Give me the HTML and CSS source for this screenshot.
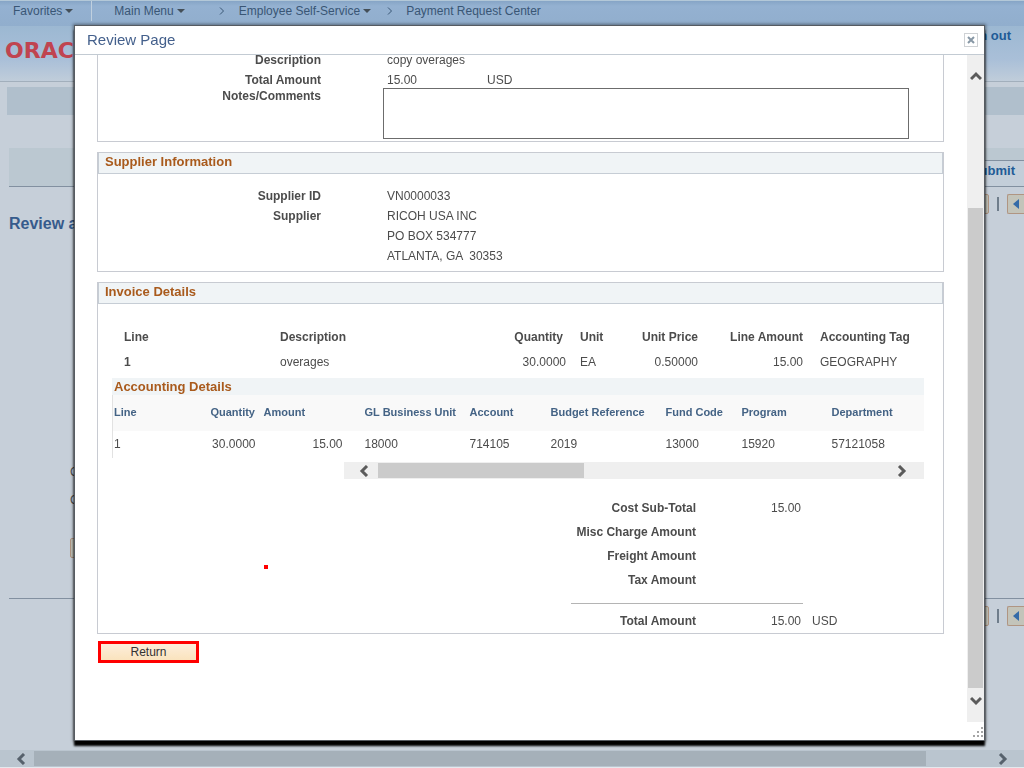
FILE: index.html
```html
<!DOCTYPE html>
<html lang="en">
<head>
<meta charset="utf-8">
<title>Review Page</title>
<link rel="stylesheet" href="styles.css">
</head>
<body>
<div class="app">
  <nav class="topnav">
    <a class="nav-link nav-fav" href="#">Favorites <span class="caret"></span></a>
    <a class="nav-link nav-main" href="#">Main Menu <span class="caret"></span></a>
    <svg class="crumb" viewBox="0 0 6 8"><path d="M1 0.5 L4.5 4 L1 7.5"/></svg>
    <a class="nav-link" href="#">Employee Self-Service <span class="caret"></span></a>
    <svg class="crumb" viewBox="0 0 6 8"><path d="M1 0.5 L4.5 4 L1 7.5"/></svg>
    <a class="nav-link" href="#">Payment Request Center</a>
  </nav>
  <header class="brand-bar">
    <span class="brand">ORACLE</span>
    <a class="sign-out" href="#">Sign out</a>
  </header>
  <main class="page">
    <div class="page-strip"></div>
    <div class="steps"><a class="step" href="#">Submit</a></div>
    <div class="page-head">
      <h1 class="page-title">Review and Submit</h1>
      <div class="pager">
        <button class="page-btn" type="button" aria-label="Exit"></button>
        <span class="pager-sep"></span>
        <button class="page-btn" type="button" aria-label="Previous"><svg class="prev" viewBox="0 0 6 10"><path d="M6 0 V10 L0 5 Z"/></svg></button>
      </div>
    </div>
    <div class="page-fields">
      <span>Comments</span>
      <span>Comments</span>
      <button class="page-btn" type="button" aria-label="Review"></button>
    </div>
    <div class="pager">
      <button class="page-btn" type="button" aria-label="Exit"></button>
      <span class="pager-sep"></span>
      <button class="page-btn" type="button" aria-label="Previous"><svg class="prev" viewBox="0 0 6 10"><path d="M6 0 V10 L0 5 Z"/></svg></button>
    </div>
  </main>
  <div class="page-scroll">
    <svg class="arrow" viewBox="0 0 10 12"><path d="M8 1 L3 6 L8 11"/></svg>
    <span class="page-thumb"></span>
    <svg class="arrow" viewBox="0 0 10 12"><path d="M2 1 L7 6 L2 11"/></svg>
  </div>
</div>

<section class="modal" role="dialog" aria-labelledby="modal-title">
  <header class="modal-head">
    <h2 class="modal-title" id="modal-title">Review Page</h2>
    <button class="close" type="button" aria-label="Close"><svg viewBox="0 0 8 8"><path d="M1 1 L7 7 M7 1 L1 7"/></svg></button>
  </header>
  <div class="modal-main">
    <div class="modal-body">
      <section class="panel panel-first">
        <div class="fields">
          <span class="label">Description</span><span>copy overages</span>
          <span class="label">Total Amount</span><span class="amount"><span>15.00</span><span>USD</span></span>
        </div>
        <div class="fields notes">
          <label class="label" for="notes">Notes/Comments</label><textarea class="notes-box" id="notes"></textarea>
        </div>
      </section>

      <section class="panel">
        <h3 class="panel-title">Supplier Information</h3>
        <div class="fields supplier">
          <span class="label">Supplier ID</span><span>VN0000033</span>
          <span class="label">Supplier</span><span class="address">RICOH USA INC
PO BOX 534777
ATLANTA, GA  30353</span>
        </div>
      </section>

      <section class="panel">
        <h3 class="panel-title">Invoice Details</h3>
        <div class="invoice">
          <table class="lines">
            <colgroup><col class="l-line"><col class="l-desc"><col class="l-qty"><col class="l-unit"><col class="l-price"><col class="l-amt"><col></colgroup>
            <thead><tr><th>Line</th><th>Description</th><th class="num inset">Quantity</th><th>Unit</th><th class="num">Unit Price</th><th class="num">Line Amount</th><th class="tag">Accounting Tag</th></tr></thead>
            <tbody><tr><td class="strong">1</td><td>overages</td><td class="num">30.0000</td><td>EA</td><td class="num">0.50000</td><td class="num">15.00</td><td class="tag">GEOGRAPHY</td></tr></tbody>
          </table>
          <h4 class="sub-title">Accounting Details</h4>
          <table class="acct">
            <colgroup><col class="a-line"><col class="a-qty"><col class="a-amt"><col class="a-gl"><col class="a-acct"><col class="a-bud"><col class="a-fund"><col class="a-prog"><col></colgroup>
            <thead><tr><th>Line</th><th class="num">Quantity</th><th>Amount</th><th>GL Business Unit</th><th>Account</th><th>Budget Reference</th><th>Fund Code</th><th>Program</th><th>Department</th></tr></thead>
            <tbody><tr><td>1</td><td class="num">30.0000</td><td class="num spaced">15.00</td><td>18000</td><td>714105</td><td>2019</td><td>13000</td><td>15920</td><td>57121058</td></tr></tbody>
          </table>
          <div class="grid-scroll">
            <svg class="arrow" viewBox="0 0 10 12"><path d="M8 1 L3 6 L8 11"/></svg>
            <span class="grid-thumb"></span>
            <svg class="arrow" viewBox="0 0 10 12"><path d="M2 1 L7 6 L2 11"/></svg>
          </div>
        </div>
        <div class="totals">
          <span class="label">Cost Sub-Total</span><span class="num">15.00</span><span></span>
          <span class="label">Misc Charge Amount</span><span></span><span></span>
          <span class="label">Freight Amount</span><span></span><span></span>
          <span class="label">Tax Amount</span><span></span><span></span>
          <hr class="rule">
          <span class="label">Total Amount</span><span class="num">15.00</span><span class="currency">USD</span>
        </div>
        <span class="marker"></span>
      </section>
      <button class="return" type="button">Return</button>
    </div>
    <div class="v-scroll">
      <svg class="arrow-v" viewBox="0 0 12 10"><path d="M1 8 L6 3 L11 8"/></svg>
      <span class="v-thumb"></span>
      <svg class="arrow-v" viewBox="0 0 12 10"><path d="M1 2 L6 7 L11 2"/></svg>
    </div>
  </div>
  <footer class="modal-foot">
    <svg class="grip" viewBox="0 0 10 10"><path d="M8 0h2v2h-2z M4 4h2v2h-2z M8 4h2v2h-2z M0 8h2v2h-2z M4 8h2v2h-2z M8 8h2v2h-2z"/></svg>
  </footer>
</section>
</body>
</html>
```
FILE: styles.css
```css
* { box-sizing: border-box; }
body {
  margin: 0;
  font: 12px/20px "Liberation Sans", Arial, sans-serif;
  color: #4c4c4c;
  background: #c6cfd9;
  overflow: hidden;
}
a { text-decoration: none; }
h1, h2, h3, h4 { margin: 0; }
button { font: inherit; padding: 0; }
svg { display: block; flex: none; }

/* Page behind the dialog */
.app { display: flex; flex-direction: column; height: 100vh; }
.topnav {
  display: flex;
  align-items: center;
  flex: none;
  height: 26px;
  padding-bottom: 5px;
  border-top: 1px solid #b3c8d8;
  background: linear-gradient(#86a5c6, #94b1d1 5px, #91aecd);
}
.nav-link { display: flex; align-items: center; gap: 3px; color: #395675; white-space: nowrap; }
.nav-fav { padding-left: 13px; }
.nav-main { margin-left: 18px; padding-left: 22px; border-left: 1px solid #c0d0df; }
.caret { border: 4px solid transparent; border-top-color: #444f58; border-bottom: 0; }
.crumb { width: 6px; height: 8px; margin: 0 13px 0 16px; fill: none; stroke: #395675; }
.nav-main + .crumb { margin: 0 14px 0 34px; }
.brand-bar {
  display: flex;
  justify-content: space-between;
  flex: none;
  height: 56px;
  padding: 0 13px 0 5px;
  border-bottom: 1px solid #a2afbc;
  background: linear-gradient(#9cb8d2, #a9bfd8 60%, #c0cdda);
}
.brand { font: bold 22px/50px "DejaVu Sans", sans-serif; color: #c04450; }
.sign-out { font-size: 13px; font-weight: bold; color: #215b96; }
.page { flex: 1; display: flex; flex-direction: column; padding: 5px 0 0 9px; }
.page-strip { flex: none; height: 28px; margin-left: -2px; background: #b0bfcc; }
.steps {
  display: flex;
  justify-content: flex-end;
  align-items: flex-end;
  flex: none;
  height: 39px;
  margin-top: 33px;
  border-bottom: 1px solid #8290a0;
  background: #bbc8d1;
}
.step {
  width: 100px;
  height: 26px;
  padding-right: 9px;
  border-top: 1px solid #8290a0;
  background: #c3ced9;
  font-size: 13px;
  font-weight: bold;
  text-align: right;
  color: #215b96;
}
.page-head { display: flex; justify-content: space-between; align-items: flex-start; }
.page-title { margin-top: 27px; font-size: 16px; line-height: 20px; color: #365b8c; }
.pager { display: flex; align-items: center; justify-content: flex-end; gap: 8px; margin-top: 7px; }
.page-btn { width: 18px; height: 20px; border: 1px solid #b09582; border-radius: 2px; background: #c3c4ba; }
.pager .page-btn:last-child { width: 17px; border-right: 0; border-radius: 2px 0 0 2px; }
.pager-sep { width: 2px; height: 14px; background: #6f7d8b; }
.prev { width: 6px; height: 10px; margin-left: 5px; fill: #356ba8; }
.page-fields {
  display: flex;
  flex-direction: column;
  gap: 8px;
  flex: 1;
  max-height: 365px;
  justify-content: flex-end;
  padding: 0 0 40px 61px;
  border-bottom: 1px solid #8290a0;
}
.page-fields .page-btn { margin-top: 20px; }
.arrow { width: 10px; height: 12px; fill: none; stroke: #5b5b5b; stroke-width: 3; }
.page-scroll {
  display: flex;
  align-items: center;
  gap: 8px;
  flex: none;
  height: 18px;
  padding: 0 16px;
  border-bottom: 1px solid #e4e9ee;
  background: #bac5cf;
}
.page-scroll .arrow { stroke: #56616c; }
.page-thumb { flex: 1; height: 15px; margin-right: 64px; background: #a5b0b9; }

/* Dialog */
.modal {
  position: fixed;
  inset: 25px 39px 27px 74px;
  display: flex;
  flex-direction: column;
  border: 1px solid #565b61;
  background: #fff;
  box-shadow: 0 5px 2px #000, 0 0 3px 1px rgba(0, 0, 0, .4);
}
.modal-head {
  display: flex;
  align-items: center;
  justify-content: space-between;
  flex: none;
  height: 29px;
  padding: 0 6px 0 12px;
  border-bottom: 1px solid #c3cbd3;
}
.modal-title { font-size: 15px; font-weight: normal; color: #44608c; }
.close { width: 14px; height: 14px; border: 1px solid #cfd2d5; background: #fff; }
.close svg { width: 8px; height: 8px; margin: 0 auto; fill: none; stroke: #8797a5; stroke-width: 2; }
.modal-main { display: flex; flex: 1; min-height: 0; }
.modal-body {
  display: flex;
  flex-direction: column;
  align-items: stretch;
  gap: 10px;
  flex: 1;
  min-width: 0;
  overflow: hidden;
  padding: 0 23px 0 22px;
}
.panel { position: relative; flex: none; border: 1px solid #c8cbd2; }
.panel-first { margin-top: -7px; padding-bottom: 2px; border-top: 0; }
.panel-title, .sub-title { font-size: 13px; color: #a95a1c; background: #f0f4f6; }
.panel-title {
  height: 21px;
  padding-left: 6px;
  line-height: 18px;
  border: solid #c6cdd5;
  border-width: 0 1px 1px;
}
.label { font-weight: bold; text-align: right; }
.fields { display: grid; grid-template-columns: 223px 1fr; column-gap: 66px; padding-top: 2px; }
.amount { display: grid; grid-template-columns: 100px 1fr; }
.notes { column-gap: 62px; padding: 0 34px 0 0; line-height: 12px; }
.notes-box { display: block; width: 100%; height: 51px; margin-top: -2px; border: 1px solid #6c6c6c; background: #fff; resize: none; }
.supplier { padding: 12px 0 5px; }
.address { white-space: pre; }
.invoice { padding: 20px 19px 0 12px; }
table { width: 100%; table-layout: fixed; border-collapse: collapse; white-space: nowrap; }
th, td { padding: 0; text-align: left; }
th.num, td.num, .num { text-align: right; }
.strong { font-weight: bold; }
.lines th, .lines td { height: 25px; padding-left: 14px; }
.lines .inset { padding-right: 3px; }
.lines .tag { padding-left: 17px; }
.l-line { width: 156px; }
.l-desc { width: 200px; }
.l-qty { width: 100px; }
.l-unit { width: 60px; }
.l-price { width: 72px; }
.l-amt { width: 105px; }
.sub-title { margin: 4px 0 0 2px; padding-left: 2px; line-height: 17px; }
.acct { border-left: 1px solid #e2e2e2; width: calc(100% - 2px); margin-left: 2px; }
.acct th { height: 36px; padding: 0 0 2px 8px; font-size: 11px; color: #446385; background: #f9f9f9; }
.acct td { height: 27px; padding: 0 0 2px 8px; }
.acct th:first-child, .acct td:first-child { padding-left: 1px; }
.acct td.spaced { padding-right: 14px; }
.a-line { width: 87px; }
.a-qty { width: 56px; }
.a-amt { width: 101px; }
.a-gl { width: 105px; }
.a-acct { width: 81px; }
.a-bud { width: 115px; }
.a-fund { width: 76px; }
.a-prog { width: 90px; }
.grid-scroll {
  display: flex;
  align-items: center;
  height: 17px;
  margin: 4px 0 0 234px;
  padding: 0 17px 0 15px;
  background: #efefef;
}
.grid-thumb { width: 206px; height: 15px; margin: 0 auto 0 9px; background: #cbcbcb; }
.totals {
  display: grid;
  grid-template-columns: 125px 105px auto;
  margin: 17px 0 0 473px;
  line-height: 24px;
}
.currency { padding-left: 11px; }
.rule { grid-column: 1 / -1; width: 232px; margin: 11px 0 5px; border: 0; border-top: 1px solid #b4b4b4; }
/* Red annotation dot */
.marker { position: absolute; left: 166px; bottom: 64px; width: 4px; height: 4px; background: #f00; }
.return {
  flex: none;
  align-self: flex-start;
  width: 101px;
  height: 22px;
  margin: -3px 0 0 1px;
  border: 3px solid #f00;
  background: linear-gradient(#fdeedb, #fae3bd);
  line-height: 16px;
  color: #333;
}
.v-scroll {
  display: flex;
  flex-direction: column;
  align-items: center;
  flex: none;
  width: 17px;
  padding: 16px 0;
  background: #efefef;
}
.arrow-v { width: 12px; height: 10px; fill: none; stroke: #5b5b5b; stroke-width: 3; }
.v-thumb { flex: 1; width: 15px; margin: 127px 0 8px; background: #cbcbcb; }
.modal-foot { display: flex; justify-content: flex-end; align-items: flex-end; flex: none; height: 18px; padding: 0 1px 3px; }
.grip { width: 10px; height: 10px; fill: #a5a5a5; }
```
